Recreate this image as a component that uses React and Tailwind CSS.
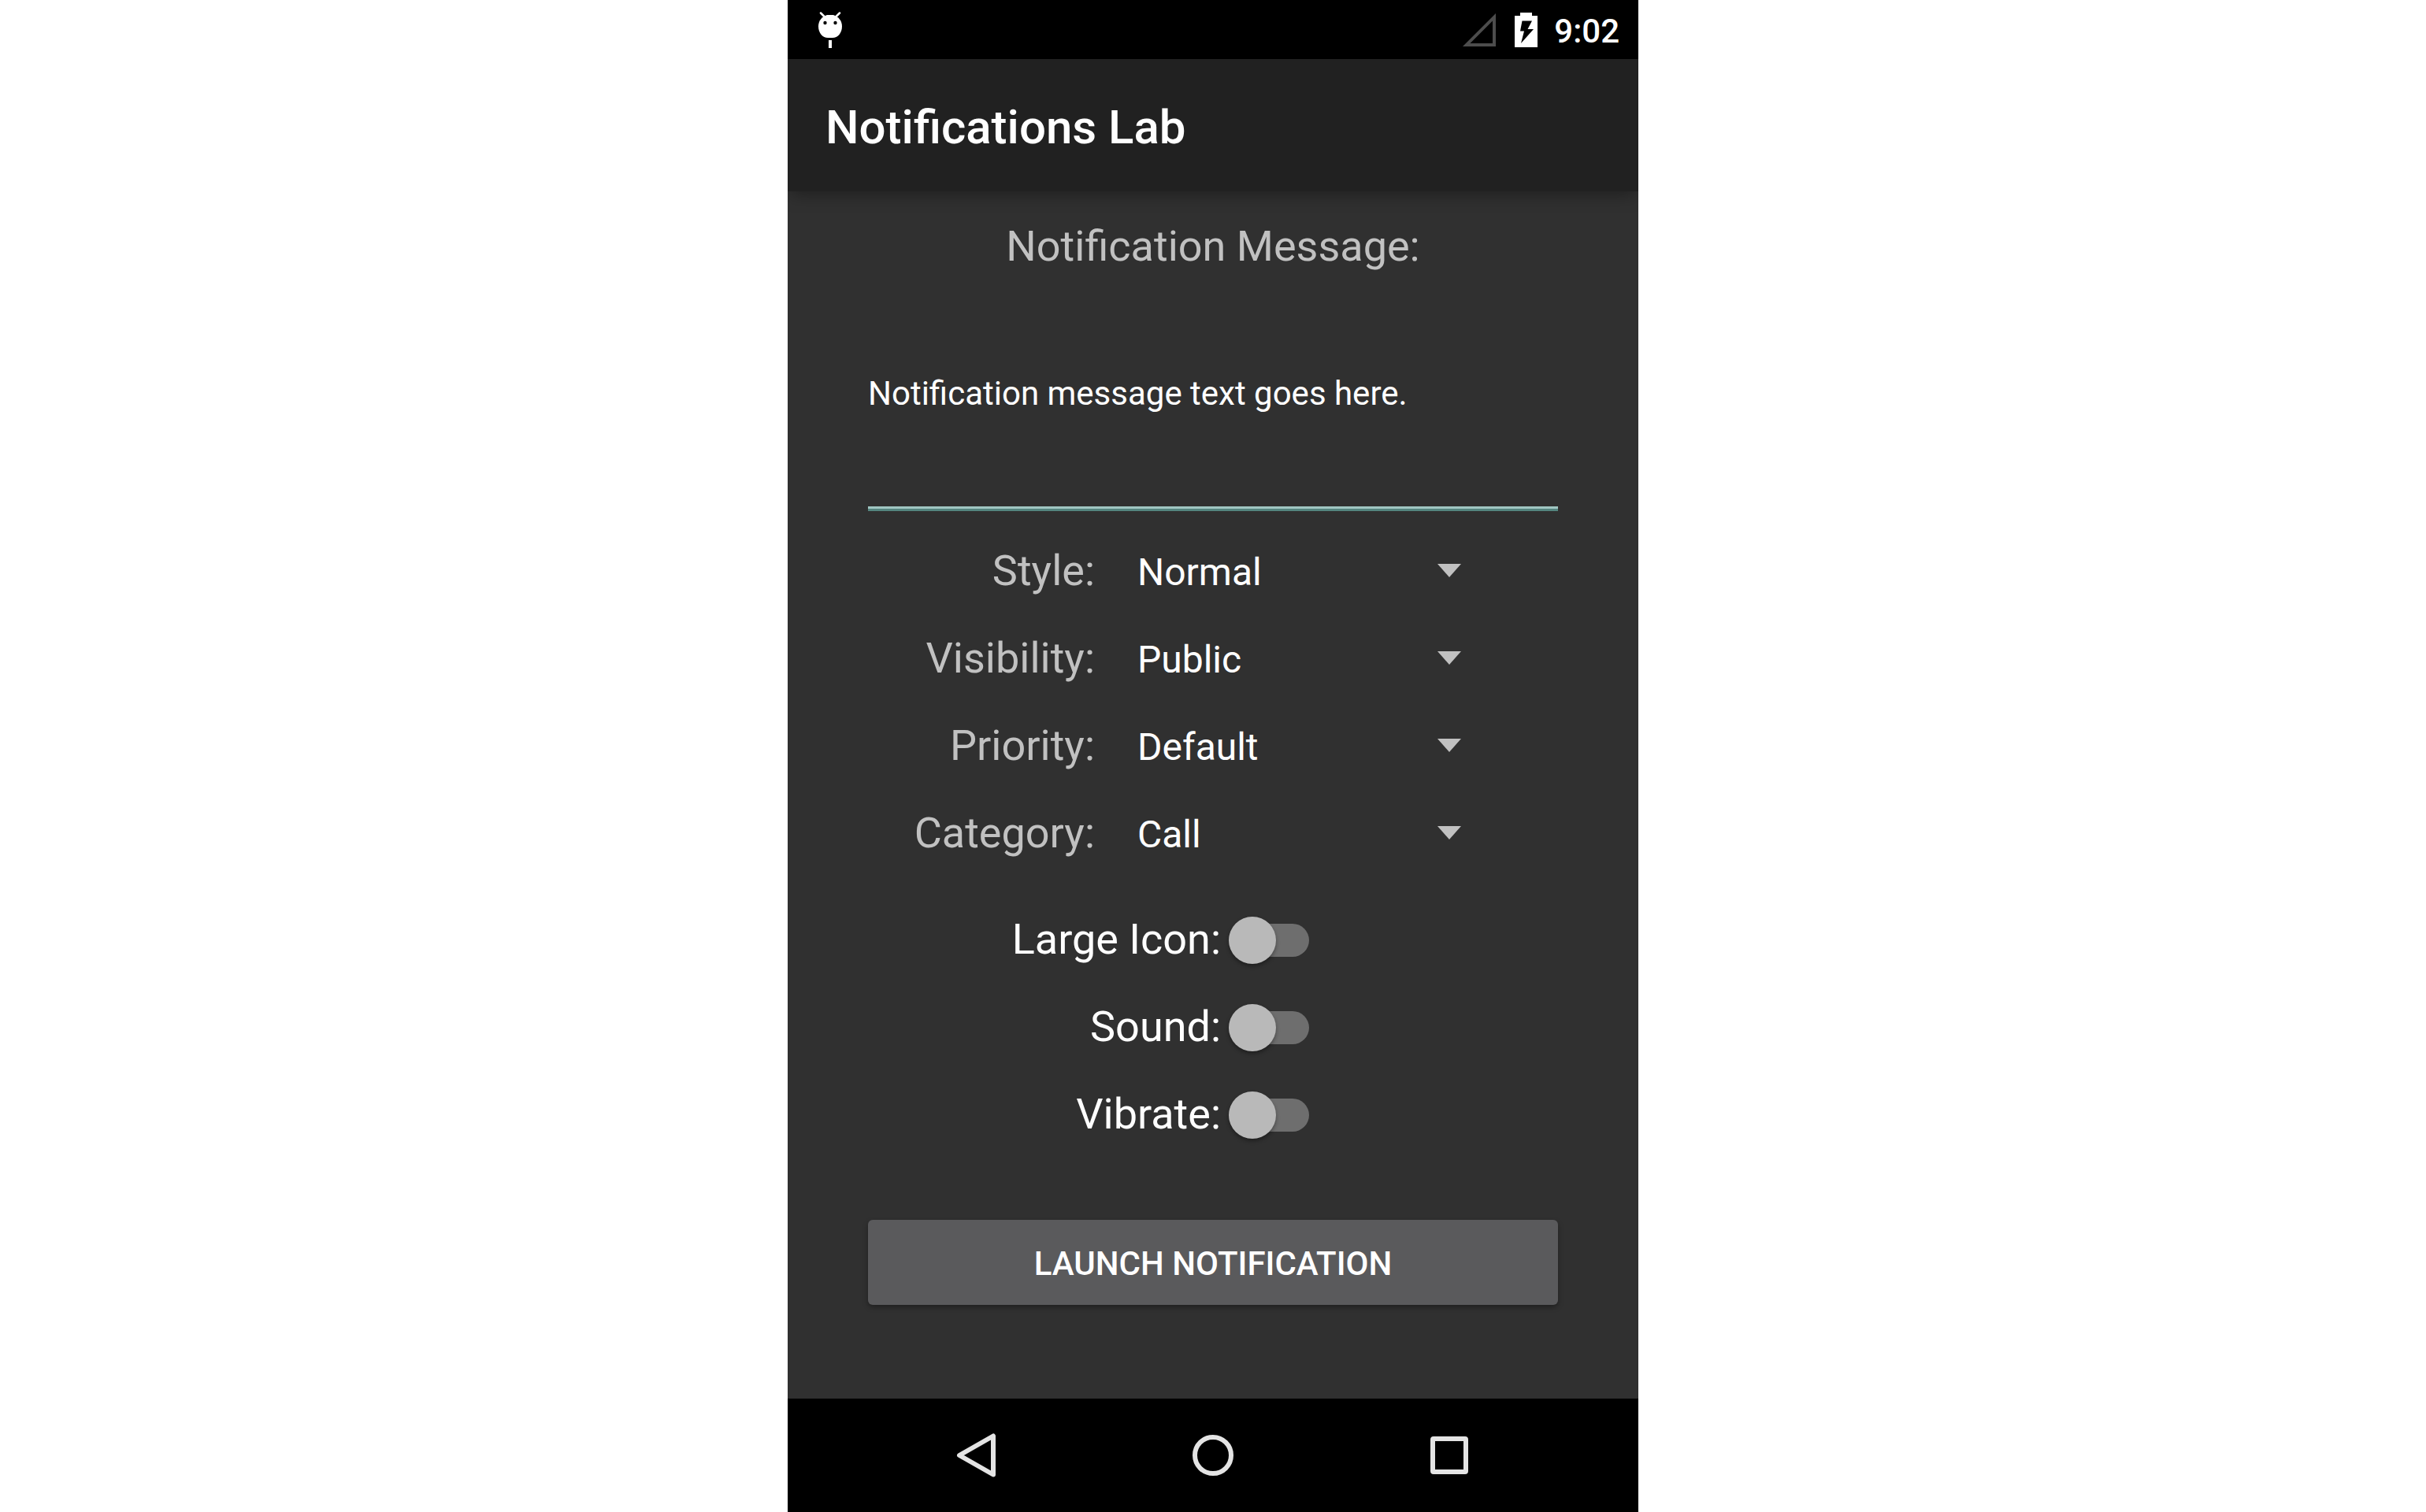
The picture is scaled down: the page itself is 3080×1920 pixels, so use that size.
import { useState } from "react";

const SPINNERS = [
  { id: "style", label: "Style:", options: ["Normal", "Big Text", "Inbox", "Picture"] },
  { id: "visibility", label: "Visibility:", options: ["Public", "Private", "Secret"] },
  { id: "priority", label: "Priority:", options: ["Default", "Low", "Min", "High", "Max"] },
  { id: "category", label: "Category:", options: ["Call", "Alarm", "Email", "Message"] },
];

const SWITCHES = [
  { id: "large-icon", label: "Large Icon:" },
  { id: "sound", label: "Sound:" },
  { id: "vibrate", label: "Vibrate:" },
];

function DebugIcon() {
  return (
    <svg width="30" height="46" viewBox="0 0 30 46" aria-hidden="true">
      <path d="M3 1.500 8 6.500M27 1.500 22 6.500" stroke="#fff" strokeWidth="2.500" strokeLinecap="round" />
      <path
        d="M11 4h8c6.500 2 11 7.500 11 14.500C30 27 24.500 33 18 33h-6C5.500 33 0 27 0 18.500 0 11.500 4.500 6 11 4Z"
        fill="#fff"
      />
      <circle cx="8.500" cy="14" r="2.200" fill="#000" />
      <circle cx="21.500" cy="14" r="2.200" fill="#000" />
      <rect x="13" y="36" width="4" height="10" fill="#fff" />
    </svg>
  );
}

function SignalIcon() {
  return (
    <svg width="42" height="42" viewBox="0 0 42 42" aria-hidden="true">
      <path d="M42 0v42H0L42 0Zm-4 9.500L9.500 38H38V9.500Z" fill="#4d4d4d" fillRule="evenodd" />
    </svg>
  );
}

function BatteryIcon() {
  return (
    <svg width="29" height="44" viewBox="0 0 29 44" aria-hidden="true">
      <path d="M7 0h15v4h7v40H0V4h7V0Z" fill="#fff" />
      <path d="M9.500 10.500H22L16.500 21H24L8 39l4-15.500H7L9.500 10.500Z" fill="#000" />
    </svg>
  );
}

function StatusBar() {
  return (
    <div className="flex h-[75px] items-center bg-black pr-6 pl-[39px]">
      <DebugIcon />
      <div className="ml-auto flex items-center">
        <SignalIcon />
        <div className="mr-[21px] ml-6">
          <BatteryIcon />
        </div>
        <span className="pt-[5px] text-[42px] leading-[50px] font-medium">9:02</span>
      </div>
    </div>
  );
}

function Spinner({ id, label, options }) {
  return (
    <div className="flex h-[111px] items-baseline">
      <label htmlFor={id} className="w-1/3 pr-1 text-right text-[54px] leading-[64px] text-[#c1c1c1]">
        {label}
      </label>
      <div className="relative ml-[50px] w-1/2">
        <select
          id={id}
          className="w-full appearance-none bg-transparent text-[48px] leading-[56px] text-white outline-none"
        >
          {options.map((o) => (
            <option key={o} className="bg-[#303030]">
              {o}
            </option>
          ))}
        </select>
        <svg
          className="pointer-events-none absolute top-[17px] right-[27px]"
          width="30"
          height="17"
          viewBox="0 0 30 17"
          aria-hidden="true"
        >
          <path d="M0 0h30L15 17Z" fill="#c1c1c1" />
        </svg>
      </div>
    </div>
  );
}

function Switch({ id, label }) {
  const [on, setOn] = useState(false);
  return (
    <div className="flex h-[111px] items-center">
      <label htmlFor={id} className="w-1/2 pr-0.5 text-right text-[54px] leading-[64px]">
        {label}
      </label>
      <input
        id={id}
        type="checkbox"
        role="switch"
        checked={on}
        onChange={(e) => setOn(e.target.checked)}
        className="relative ml-2 h-[60px] w-[102px] appearance-none before:absolute before:inset-x-0 before:top-[10px] before:h-[42px] before:rounded-full before:bg-[#6e6e6e] after:absolute after:top-px after:left-0 after:size-[60px] after:rounded-full after:bg-[#b9b9b9] after:shadow-[0_3px_5px_rgba(0,0,0,0.35)] checked:before:bg-[#54857f] checked:after:left-[42px] checked:after:bg-[#a0c6c2]"
      />
    </div>
  );
}

function NavBar() {
  return (
    <nav className="grid h-36 grid-cols-3 bg-black px-[90px]">
      <button type="button" aria-label="Back" className="flex items-center justify-center">
        <svg width="56" height="56" viewBox="0 0 56 56" aria-hidden="true">
          <path d="M49 3.500V52.500L6 28Z" fill="none" stroke="#e4e4e4" strokeWidth="6" strokeLinejoin="round" />
        </svg>
      </button>
      <button type="button" aria-label="Home" className="flex items-center justify-center">
        <svg width="52" height="52" viewBox="0 0 52 52" aria-hidden="true">
          <circle cx="26" cy="26" r="23" fill="none" stroke="#e4e4e4" strokeWidth="6" />
        </svg>
      </button>
      <button type="button" aria-label="Overview" className="flex items-center justify-center">
        <svg width="48" height="48" viewBox="0 0 48 48" aria-hidden="true">
          <path
            d="M4 0h40a4 4 0 0 1 4 4v40a4 4 0 0 1-4 4H4a4 4 0 0 1-4-4V4a4 4 0 0 1 4-4Zm2 6v36h36V6H6Z"
            fill="#e4e4e4"
            fillRule="evenodd"
          />
        </svg>
      </button>
    </nav>
  );
}

export default function App() {
  const [message, setMessage] = useState("Notification message text goes here.");
  return (
    <div className="min-h-screen bg-white">
      <div className="mx-auto flex min-h-screen w-full max-w-[1080px] flex-col overflow-hidden bg-[#303030] font-['Roboto',sans-serif] text-white">
        <StatusBar />
        <header className="relative z-10 flex h-[168px] items-center bg-[#212121] px-12 pt-1.5 shadow-[0_8px_20px_-4px_rgba(0,0,0,0.35)]">
          <h1 className="text-[60px] leading-[72px] font-medium">Notifications Lab</h1>
        </header>
        <main className="flex flex-1 flex-col px-[102px] pt-[38px] pb-12">
          <label htmlFor="message" className="text-center text-[54px] leading-[64px] text-[#c1c1c1]">
            Notification Message:
          </label>
          <input
            id="message"
            type="text"
            value={message}
            onChange={(e) => setMessage(e.target.value)}
            className="mt-3 h-[292px] w-full border-b-[3px] border-[#54857f] bg-transparent pb-1 text-[42px] leading-[50px] text-white shadow-[inset_0_-3px_#a0c6c2] outline-none"
          />
          <section className="mt-11">
            {SPINNERS.map((s) => (
              <Spinner key={s.id} {...s} />
            ))}
          </section>
          <section className="pl-6">
            {SWITCHES.map((s) => (
              <Switch key={s.id} {...s} />
            ))}
          </section>
          <button
            type="button"
            className="mt-[79px] h-[108px] rounded-md bg-[#5a5a5c] pt-1 text-[42px] leading-[50px] font-medium uppercase shadow-[0_3px_6px_rgba(0,0,0,0.35)]"
          >
            Launch Notification
          </button>
        </main>
        <NavBar />
      </div>
    </div>
  );
}
